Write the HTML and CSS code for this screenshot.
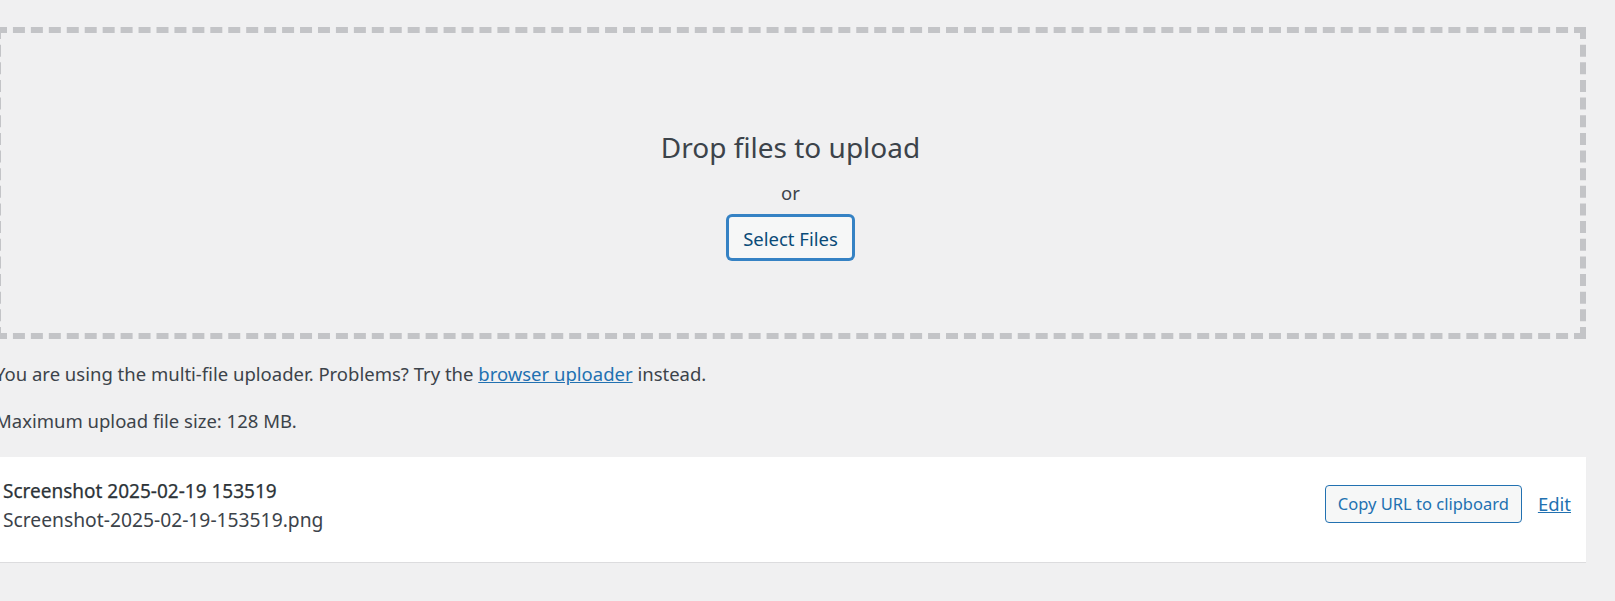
FILE: index.html
```html
<!DOCTYPE html>
<html>
<head>
  <title>Upload New Media</title>
  <link rel="stylesheet" href="styles.css">
</head>
<body>

  <div class="wrap">
    <div class="drop-area">
      <p class="drop-info">Drop files to upload</p>
      <p class="drop-or">or</p>
      <button class="button button-focus" type="button">Select Files</button>
    </div>

    <p class="upload-note">You are using the multi-file uploader. Problems? Try the <a href="#">browser uploader</a> instead.</p>
    <p class="upload-note">Maximum upload file size: 128 MB.</p>

    <div class="media-item">
      <div class="filename">
        <div class="title">Screenshot 2025-02-19 153519</div>
        <div class="file">Screenshot-2025-02-19-153519.png</div>
      </div>
      <div class="actions">
        <button class="button button-small" type="button">Copy URL to clipboard</button>
        <a class="edit-link" href="#">Edit</a>
      </div>
    </div>
  </div>

</body>
</html>
```

FILE: styles.css
```css
body {
  margin: 0;
  background: #f0f0f1;
  color: #3c434a;
  font-family: "Noto Sans", "Open Sans", sans-serif;
  font-size: 18.5px;
  overflow: hidden;
}
p {
  margin: 0;
}
a {
  color: #2271b1;
  text-decoration: underline;
}
.wrap {
  width: 1591px;
  margin-left: -5px;
  padding-top: 27px;
}
.drop-area {
  height: 300px;
  border: 6px dashed #c3c4c7;
  display: flex;
  flex-direction: column;
  align-items: center;
  box-sizing: content-box;
}
.drop-info {
  margin-top: 94px;
  font-size: 28px;
  line-height: 40px;
}
.drop-or {
  margin-top: 12px;
  font-size: 18.5px;
  line-height: 28px;
}
.button {
  font-family: inherit;
  background: #f6f7f7;
  cursor: pointer;
}
.button-focus {
  margin-top: 8px;
  width: 127px;
  height: 45px;
  padding: 0;
  border: 2px solid #3582c4;
  border-radius: 5px;
  box-shadow: 0 0 0 1px #3582c4;
  color: #0a4b78;
  font-size: 18.5px;
  line-height: 44px;
}
.upload-note {
  line-height: 28px;
  margin-top: 21px;
}
.upload-note + .upload-note {
  margin-top: 19px;
}
.media-item {
  margin-top: 22px;
  height: 106px;
  background: #fff;
  border-bottom: 1px solid #dcdcde;
  box-shadow: 0 1px 1px rgba(0, 0, 0, 0.04);
  display: flex;
  justify-content: space-between;
  align-items: flex-start;
  box-sizing: border-box;
}
.filename {
  padding: 21px 0 0 8px;
  line-height: 27.5px;
}
.title {
  font-size: 19px;
  color: #2c3338;
  -webkit-text-stroke: 0.25px #2c3338;
}
.file {
  font-size: 19.25px;
}
.actions {
  display: flex;
  align-items: center;
  gap: 16px;
  padding: 28px 15px 0 0;
}
.button-small {
  height: 38px;
  padding: 0 12px;
  border: 1px solid #2271b1;
  border-radius: 4px;
  color: #2271b1;
  font-size: 16.5px;
  line-height: 36px;
}
.edit-link {
  font-size: 18.5px;
  line-height: 28px;
}
```
